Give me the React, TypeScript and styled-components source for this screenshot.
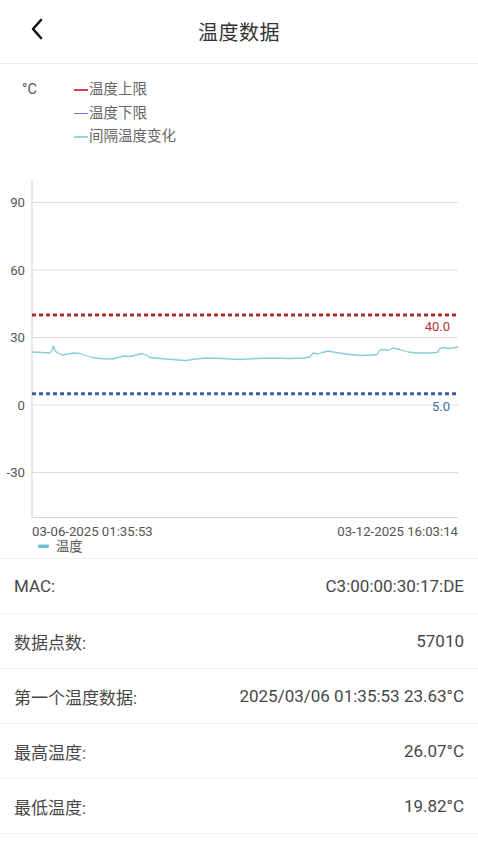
import React from 'react'
import styled, { createGlobalStyle } from 'styled-components'

const FONT = `Roboto, "Noto Sans CJK SC", "Noto Sans", sans-serif`

const GlobalStyle = createGlobalStyle`
  html, body {
    margin: 0;
    padding: 0;
    background: #ffffff;
  }
  body {
    font-family: ${FONT};
    -webkit-font-smoothing: antialiased;
  }
`

type Row = { label: string; value: string }

const ROWS: Row[] = [
  { label: 'MAC:', value: 'C3:00:00:30:17:DE' },
  { label: '数据点数:', value: '57010' },
  { label: '第一个温度数据:', value: '2025/03/06 01:35:53 23.63°C' },
  { label: '最高温度:', value: '26.07°C' },
  { label: '最低温度:', value: '19.82°C' },
]

const LEGEND = [
  { text: '温度上限', color: '#cf4545' },
  { text: '温度下限', color: '#5f7fcf' },
  { text: '间隔温度变化', color: '#8fd6dc' },
]

// screen-space samples of the recorded curve (x, y in chart coords)
const CURVE: [number, number][] = [
  [32, 172], [42, 172.5], [50, 173], [52, 170], [53.5, 166], [55, 171], [58, 173],
  [62, 175], [68, 174], [74, 173], [80, 173.5], [86, 175.5], [92, 177.5],
  [100, 178.5], [112, 179], [118, 177.5], [124, 176], [130, 176.5], [136, 175],
  [142, 173.5], [146, 175], [150, 177.5], [160, 178.5], [172, 179.5],
  [186, 180.5], [196, 179], [206, 178], [222, 178.5], [240, 179.5], [256, 178.5],
  [272, 178], [290, 178.5], [304, 178], [310, 177], [313, 173], [318, 174],
  [322, 172.5], [328, 171], [336, 172.5], [346, 174], [360, 175.5], [372, 175],
  [377, 174.5], [380, 170], [384, 169.5], [388, 170.5], [393, 168], [400, 169.5],
  [408, 172], [416, 173], [428, 173], [437, 172.5], [440, 168.5], [444, 167.5],
  [448, 168.5], [452, 168], [458, 167],
]

const CHART = {
  left: 32,
  right: 458,
  top: 0,
  min: -50,
  max: 100,
  scale: 2.25,
}

const yOf = (v: number) => CHART.top + (CHART.max - v) * CHART.scale

const Page = styled.div`
  width: 478px;
  min-height: 850px;
  background: #ffffff;
  color: #444;
`

const Header = styled.header`
  height: 63px;
  display: flex;
  align-items: center;
  justify-content: center;
  position: relative;
  border-bottom: 1px solid #ececec;
`

const BackButton = styled.button`
  position: absolute;
  left: 26px;
  top: 16px;
  width: 22px;
  height: 26px;
  padding: 0;
  border: none;
  background: none;
  display: flex;
  align-items: center;
  justify-content: center;
`

const Title = styled.h1`
  margin: 0;
  font-size: 20px;
  font-weight: 400;
  color: #333;
  letter-spacing: 0.5px;
`

const LegendBlock = styled.section`
  display: flex;
  padding: 14px 0 0 22px;
  height: 102px;
  box-sizing: border-box;
`

const Unit = styled.span`
  width: 52px;
  font-size: 14.5px;
  line-height: 23.5px;
  color: #555;
`

const LegendList = styled.ul`
  margin: 0;
  padding: 0;
  list-style: none;
`

const LegendItem = styled.li<{ $color: string }>`
  display: flex;
  align-items: center;
  font-size: 14.5px;
  line-height: 23.5px;
  color: #666;

  &::before {
    content: '';
    width: 14px;
    height: 1.5px;
    background: ${({ $color }) => $color};
    margin-right: 1px;
  }
`

const ChartBox = styled.section`
  height: 378px;
  margin-top: 14px;
`

const InfoList = styled.div`
  border-top: 1px solid #f0f0f0;
`

const InfoRow = styled.div`
  height: 54px;
  display: flex;
  align-items: center;
  justify-content: space-between;
  padding: 0 14px;
  border-bottom: 1px solid #f2f2f2;
  font-size: 17px;
  color: #474747;
`

const Chart: React.FC = () => {
  const grid = [90, 60, 30, 0, -30]
  const bottom = yOf(CHART.min)
  const path = CURVE.map(([x, y], i) => `${i ? 'L' : 'M'}${x},${y}`).join(' ')
  const axisText = { fontSize: 13.2, fill: '#555', fontFamily: FONT }

  return (
    <svg width='478' height='378' viewBox='0 0 478 378'>
      {grid.map((v) => (
        <g key={v}>
          <line x1={CHART.left} x2={CHART.right} y1={yOf(v)} y2={yOf(v)} stroke='#dcdcdc' strokeWidth='1' />
          <text x='25' y={yOf(v) + 4.5} textAnchor='end' {...axisText}>
            {v}
          </text>
        </g>
      ))}
      <line x1={CHART.left} x2={CHART.left} y1='0' y2={bottom} stroke='#d0d0d0' strokeWidth='1' />
      <line x1={CHART.left} x2={CHART.right} y1={bottom} y2={bottom} stroke='#d6d6d6' strokeWidth='1' />

      <line x1={CHART.left} x2={CHART.right} y1={yOf(40)} y2={yOf(40)} stroke='#b72a2a' strokeWidth='3' strokeDasharray='4 3' />
      <text x='450' y={yOf(40) + 16} textAnchor='end' fontSize='13' fill='#b53333' fontFamily={FONT}>
        40.0
      </text>

      <line x1={CHART.left} x2={CHART.right} y1={yOf(5)} y2={yOf(5)} stroke='#3d5fa8' strokeWidth='3' strokeDasharray='4 3' />
      <text x='450' y={yOf(5) + 17} textAnchor='end' fontSize='13' fill='#4a68b3' fontFamily={FONT}>
        5.0
      </text>

      <path d={path} fill='none' stroke='#86cfd8' strokeWidth='1.3' strokeLinejoin='round' />

      <text x={CHART.left} y='356' {...axisText}>
        03-06-2025 01:35:53
      </text>
      <text x={CHART.right} y='356' textAnchor='end' {...axisText}>
        03-12-2025 16:03:14
      </text>
      <rect x='38' y='364.5' width='11' height='3.5' rx='1' fill='#6cc3cf' />
      <text x='56' y='371' {...axisText}>
        温度
      </text>
    </svg>
  )
}

const App: React.FC = () => (
  <Page>
    <GlobalStyle />
    <Header>
      <BackButton aria-label='back'>
        <svg width='14' height='22' viewBox='0 0 14 22'>
          <path d='M11 2 L3 11 L11 20' fill='none' stroke='#111' strokeWidth='2.6' strokeLinecap='round' strokeLinejoin='round' />
        </svg>
      </BackButton>
      <Title>温度数据</Title>
    </Header>

    <LegendBlock>
      <Unit>°C</Unit>
      <LegendList>
        {LEGEND.map((item) => (
          <LegendItem key={item.text} $color={item.color}>
            {item.text}
          </LegendItem>
        ))}
      </LegendList>
    </LegendBlock>

    <ChartBox>
      <Chart />
    </ChartBox>

    <InfoList>
      {ROWS.map((row) => (
        <InfoRow key={row.label}>
          <span>{row.label}</span>
          <span>{row.value}</span>
        </InfoRow>
      ))}
    </InfoList>
  </Page>
)

export default App
